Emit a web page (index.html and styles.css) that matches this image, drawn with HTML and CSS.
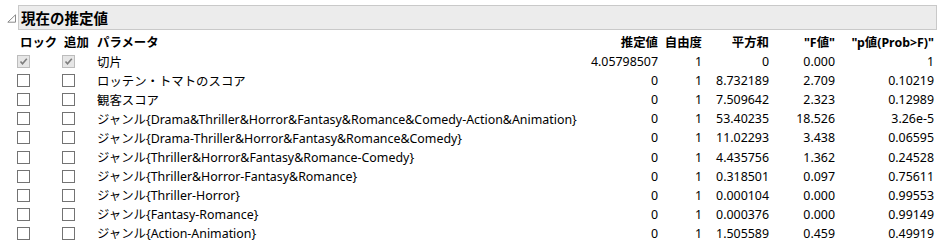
FILE: index.html
```html
<!DOCTYPE html>
<html lang="ja">
<head>
<meta charset="utf-8">
<title>現在の推定値</title>
<link rel="stylesheet" href="styles.css">
</head>
<body>
<div class="report">
  <div class="title-row">
    <svg class="disclosure" width="10" height="9" viewBox="0 0 10 9"><path d="M8.5 0.8 L8.5 8.2 L0.8 8.2 Z" fill="none" stroke="#8a8a8a" stroke-width="1"/></svg>
    <div class="title-box">現在の推定値</div>
  </div>
  <div class="grid">
    <div class="h c1">ロック</div><div class="h c2">追加</div><div class="h c3">パラメータ</div><div class="h num">推定値</div><div class="h num">自由度</div><div class="h num">平方和</div><div class="h num">"F値"</div><div class="h num">"p値(Prob&gt;F)"</div>

    <div class="cb-cell"><span class="cb checked"><svg width="11" height="11" viewBox="0 0 11 11"><path d="M2.5 5.5 L4.5 7.8 L8.8 2.8" fill="none" stroke="#7d7d7d" stroke-width="1.6"/></svg></span></div><div class="cb-cell"><span class="cb checked"><svg width="11" height="11" viewBox="0 0 11 11"><path d="M2.5 5.5 L4.5 7.8 L8.8 2.8" fill="none" stroke="#7d7d7d" stroke-width="1.6"/></svg></span></div><div class="c3">切片</div><div class="num">4.05798507</div><div class="num">1</div><div class="num">0</div><div class="num">0.000</div><div class="num">1</div>

    <div class="cb-cell"><span class="cb"></span></div><div class="cb-cell"><span class="cb"></span></div><div class="c3">ロッテン・トマトのスコア</div><div class="num">0</div><div class="num">1</div><div class="num">8.732189</div><div class="num">2.709</div><div class="num">0.10219</div>

    <div class="cb-cell"><span class="cb"></span></div><div class="cb-cell"><span class="cb"></span></div><div class="c3">観客スコア</div><div class="num">0</div><div class="num">1</div><div class="num">7.509642</div><div class="num">2.323</div><div class="num">0.12989</div>

    <div class="cb-cell"><span class="cb"></span></div><div class="cb-cell"><span class="cb"></span></div><div class="c3">ジャンル{Drama&amp;Thriller&amp;Horror&amp;Fantasy&amp;Romance&amp;Comedy-Action&amp;Animation}</div><div class="num">0</div><div class="num">1</div><div class="num">53.40235</div><div class="num">18.526</div><div class="num">3.26e-5</div>

    <div class="cb-cell"><span class="cb"></span></div><div class="cb-cell"><span class="cb"></span></div><div class="c3">ジャンル{Drama-Thriller&amp;Horror&amp;Fantasy&amp;Romance&amp;Comedy}</div><div class="num">0</div><div class="num">1</div><div class="num">11.02293</div><div class="num">3.438</div><div class="num">0.06595</div>

    <div class="cb-cell"><span class="cb"></span></div><div class="cb-cell"><span class="cb"></span></div><div class="c3">ジャンル{Thriller&amp;Horror&amp;Fantasy&amp;Romance-Comedy}</div><div class="num">0</div><div class="num">1</div><div class="num">4.435756</div><div class="num">1.362</div><div class="num">0.24528</div>

    <div class="cb-cell"><span class="cb"></span></div><div class="cb-cell"><span class="cb"></span></div><div class="c3">ジャンル{Thriller&amp;Horror-Fantasy&amp;Romance}</div><div class="num">0</div><div class="num">1</div><div class="num">0.318501</div><div class="num">0.097</div><div class="num">0.75611</div>

    <div class="cb-cell"><span class="cb"></span></div><div class="cb-cell"><span class="cb"></span></div><div class="c3">ジャンル{Thriller-Horror}</div><div class="num">0</div><div class="num">1</div><div class="num">0.000104</div><div class="num">0.000</div><div class="num">0.99553</div>

    <div class="cb-cell"><span class="cb"></span></div><div class="cb-cell"><span class="cb"></span></div><div class="c3">ジャンル{Fantasy-Romance}</div><div class="num">0</div><div class="num">1</div><div class="num">0.000376</div><div class="num">0.000</div><div class="num">0.99149</div>

    <div class="cb-cell"><span class="cb"></span></div><div class="cb-cell"><span class="cb"></span></div><div class="c3">ジャンル{Action-Animation}</div><div class="num">0</div><div class="num">1</div><div class="num">1.505589</div><div class="num">0.459</div><div class="num">0.49919</div>
  </div>
</div>
</body>
</html>
```
FILE: styles.css
```css
html, body {
  margin: 0;
  padding: 0;
  background: #ffffff;
}
body {
  font-family: "Noto Sans", "Noto Sans CJK JP", sans-serif;
  font-size: 12.4px;
  color: #000;
}
.report {
  width: 943px;
}
.title-row {
  display: flex;
  align-items: center;
  padding-top: 5px;
  padding-left: 7px;
  padding-right: 6px;
}
.disclosure {
  flex: none;
  width: 10px;
  height: 9px;
  margin-right: 1px;
  margin-top: 2px;
}
.title-box {
  flex: 1;
  height: 23px;
  background: #ececec;
  border: 1px solid #c9c9c9;
  font-family: "Noto Sans CJK JP", sans-serif;
  font-weight: bold;
  font-size: 14.5px;
  line-height: 23px;
  padding-left: 2px;
}
.grid {
  display: grid;
  grid-template-columns: 45px 35px 481px 80px 44px 67px 66px 99px;
  grid-template-rows: 20px;
  grid-auto-rows: 19.1px;
  margin-left: 17px;
  width: 917px;
  margin-top: 2px;
}
.grid > div {
  display: flex;
  align-items: center;
  white-space: nowrap;
}
.h {
  font-weight: bold;
  font-size: 12.4px;
}
.h.c1 {
  padding-left: 3px;
}
.h.c2 {
  padding-left: 2px;
}
.num {
  justify-content: flex-end;
}
.cb {
  display: inline-flex;
  align-items: center;
  justify-content: center;
  box-sizing: border-box;
  width: 13px;
  height: 13px;
  border: 1px solid #737373;
  background: #fff;
}
.cb.checked {
  border-color: #bcbcbc;
  background: #e6e6e6;
}
```
